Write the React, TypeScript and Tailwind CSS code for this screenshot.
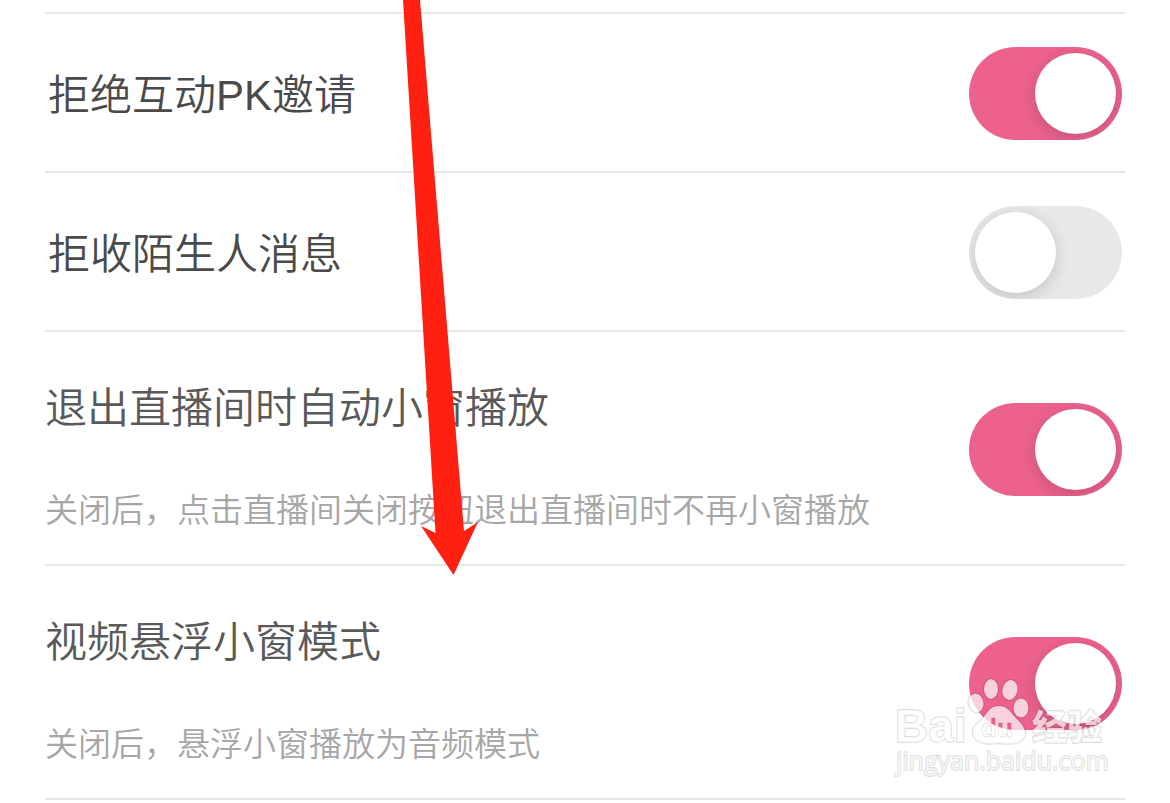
import React from "react";

interface Setting {
  id: string;
  title: string;
  description?: string;
  enabled: boolean;
}

const INITIAL_SETTINGS: Setting[] = [
  { id: "reject-pk", title: "拒绝互动PK邀请", enabled: true },
  { id: "reject-strangers", title: "拒收陌生人消息", enabled: false },
  {
    id: "auto-mini",
    title: "退出直播间时自动小窗播放",
    description: "关闭后，点击直播间关闭按钮退出直播间时不再小窗播放",
    enabled: true,
  },
  {
    id: "floating-video",
    title: "视频悬浮小窗模式",
    description: "关闭后，悬浮小窗播放为音频模式",
    enabled: true,
  },
];

interface RowProps {
  setting: Setting;
  onToggle: (id: string) => void;
}

const SettingRow: React.FC<RowProps> = ({ setting, onToggle }) => {
  const { id, title, description, enabled } = setting;

  return (
    <li
      className={`flex items-center justify-between border-b-2 border-[#e6e6e6] pt-0.5 pr-[3px] ${
        description ? "h-[234px]" : "h-[159px] pl-[3px]"
      }`}
    >
      <div className={`flex flex-col gap-12 ${description ? "pt-4" : "pt-1"}`}>
        <label
          htmlFor={id}
          className={`text-[42px] leading-[60px] ${
            description ? "text-[#595959]" : "text-[#4a4a4a]"
          }`}
        >
          {title}
        </label>
        {description && (
          <p
            id={`${id}-description`}
            className="text-[33px] leading-[48px] text-[#a6a6a6]"
          >
            {description}
          </p>
        )}
      </div>
      <input
        id={id}
        type="checkbox"
        role="switch"
        checked={enabled}
        onChange={() => onToggle(id)}
        aria-describedby={description ? `${id}-description` : undefined}
        className="flex h-[93px] w-[153px] shrink-0 cursor-pointer appearance-none overflow-hidden rounded-full bg-[#e8e8e8] p-1.5 before:size-[81px] before:rounded-full before:bg-white before:shadow-[0_4px_16px_rgba(0,0,0,0.16)] checked:justify-end checked:bg-[#ec628c]"
      />
    </li>
  );
};

const Watermark: React.FC = () => (
  <svg
    viewBox="0 0 220 110"
    className="pointer-events-none absolute right-[60px] bottom-5 w-[220px]"
    fill="#fff"
    fillOpacity="0.7"
    stroke="#000"
    strokeOpacity="0.13"
    strokeWidth="2"
    paintOrder="stroke"
    aria-label="Baidu 经验"
  >
    <defs>
      <text id="du" x="91" y="64" fontSize="26" fontWeight="700">
        du
      </text>
      <mask id="du-cutout" maskUnits="userSpaceOnUse" width="220" height="110">
        <rect width="220" height="110" fillOpacity="1" stroke="none" />
        <use href="#du" fill="#000" fillOpacity="1" stroke="none" />
      </mask>
    </defs>
    <text x="5" y="69" fontSize="46" fontWeight="700">
      Bai
    </text>
    <ellipse cx="86" cy="30" rx="7.500" ry="9.500" transform="rotate(-12 86 30)" />
    <ellipse cx="101" cy="16" rx="7" ry="10" />
    <ellipse cx="120" cy="17" rx="7.500" ry="10" transform="rotate(12 120 17)" />
    <ellipse cx="131" cy="35" rx="7.500" ry="9.500" />
    <path
      d="M109 33c-10 0-12 8-18 14-6 5-9 8-8 14 2 9 11 11 26 9 14 2 24 1 26-8 1-7-4-12-9-17-6-6-8-12-17-12z"
      mask="url(#du-cutout)"
    />
    <use href="#du" fill="none" strokeWidth="1" />
    <text x="142" y="67" fontSize="35" fontWeight="900">
      经验
    </text>
    <text
      x="6"
      y="97"
      fontSize="25"
      fontWeight="500"
      className="font-['Open_Sans',sans-serif]"
    >
      jingyan.baidu.com
    </text>
  </svg>
);

const App: React.FC = () => {
  const [settings, setSettings] = React.useState(INITIAL_SETTINGS);

  const handleToggle = (id: string) => {
    setSettings((prev) =>
      prev.map((s) => (s.id === id ? { ...s, enabled: !s.enabled } : s))
    );
  };

  return (
    <main className="relative overflow-hidden bg-white pb-[3px] font-['Liberation_Sans','Noto_Sans_CJK_SC',sans-serif] font-[350]">
      <ul className="mx-[45px] mt-3 border-t-2 border-[#e6e6e6]">
        {settings.map((s) => (
          <SettingRow key={s.id} setting={s} onToggle={handleToggle} />
        ))}
      </ul>

      {/* Arrow pointing at the floating window row */}
      <svg
        viewBox="0 0 80 576"
        className="pointer-events-none absolute top-0 left-[400px] w-20"
        fill="#ff2012"
        aria-hidden="true"
      >
        <path d="M3 0H20L64 531L78 522L53.500 575L21 526L35.500 533Z" />
      </svg>

      <Watermark />
    </main>
  );
};

export default App;
